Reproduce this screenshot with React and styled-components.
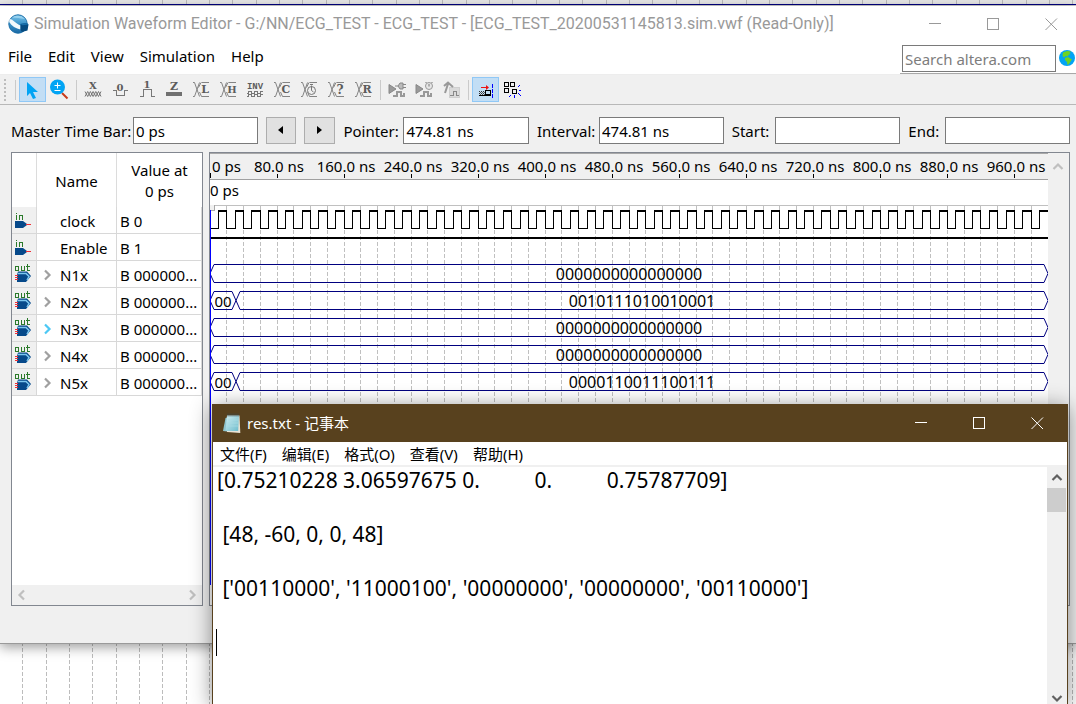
import React, { useLayoutEffect, useRef, useState } from "react";
import styled, { createGlobalStyle, css } from "styled-components";

const UI_FONT = '"Noto Sans", "Noto Sans CJK SC", sans-serif';
const TITLE_FONT = 'Roboto, "Noto Sans", sans-serif';

const GlobalStyle = createGlobalStyle`
  *, *::before, *::after { box-sizing: border-box; }
  body { margin: 0; background: #fff; font: 15px/20px ${UI_FONT}; color: #000; }
  button, input, textarea { font: inherit; color: inherit; margin: 0; border-radius: 0; }
`;

/* ---------- desktop ---------- */

const Desktop = styled.div`
  position: relative;
  display: flex;
  flex-direction: column;
  height: 100vh;
  min-height: 640px;
  padding-bottom: 60px;
  overflow: hidden;
`;

const Backdrop = styled.svg`
  position: absolute;
  inset: 0;
  width: 100%;
  height: 100%;
`;

const Editor = styled.main`
  position: relative;
  flex: 1;
  display: flex;
  flex-direction: column;
  margin-top: 6px;
  background: #f0f0f0;
  border-bottom: 1px solid #9a9a9a;
  box-shadow: 0 3px 12px rgba(0, 0, 0, 0.4);
`;

/* ---------- title bars ---------- */

const TitleBar = styled.header`
  display: flex;
  align-items: center;
  height: ${(p) => (p.$dark ? 38 : 36)}px;
  padding: 0 ${(p) => (p.$dark ? 5 : 0)}px 0 8px;
  background: ${(p) => (p.$dark ? "#58411e" : "#fff")};
  color: ${(p) => (p.$dark ? "#fff" : "#999")};
`;

const Title = styled.h1`
  flex: 1;
  margin: 0 0 0 4px;
  font-family: ${TITLE_FONT};
  font-size: 16px;
  font-weight: 400;
  line-height: 20px;
  white-space: nowrap;
`;

const NoteTitle = styled.h2`
  flex: 1;
  margin: 0 0 0 5px;
  font-size: 15px;
  font-weight: 400;
  line-height: 20px;
  white-space: nowrap;
`;

const WindowControls = styled.div`
  display: flex;
  gap: 8px;
`;

const ControlButton = styled.button`
  display: grid;
  place-items: center;
  width: 50px;
  height: 30px;
  padding: 0;
  border: 0;
  background: none;
`;

/* ---------- menus ---------- */

const MenuRow = styled.div`
  display: flex;
  justify-content: space-between;
  height: 33px;
  background: #fff;
  border-bottom: 1px solid #ededed;
`;

const Menu = styled.nav`
  display: flex;
  gap: ${(p) => p.$gap}px;
  padding-left: ${(p) => p.$left}px;
`;

const MenuItem = styled.button`
  height: ${(p) => (p.$compact ? 23 : 28)}px;
  padding: 0;
  border: 0;
  background: none;
`;

const SearchArea = styled.form`
  display: flex;
  align-items: flex-start;
  gap: 2px;
  padding: 3px 0 0 2px;
  border-bottom: 1px solid #a8a8a8;
`;

const SearchInput = styled.input`
  width: 154px;
  height: 27px;
  padding: 2px;
  border: 1px solid #7a7a7a;
  background: #fff;
  &::placeholder { color: #7d7d7d; opacity: 1; }
`;

const GlobeButton = styled.button`
  display: block;
  width: 18px;
  height: 26px;
  padding: 5px 1px;
  border: 0;
  background: none;
`;

/* ---------- toolbar ---------- */

const Toolbar = styled.div`
  display: flex;
  align-items: center;
  height: 30px;
  border-bottom: 1px solid #b8b8b8;
`;

const Grip = styled.div`
  width: 2px;
  height: 22px;
  margin: 0 6px 0 4px;
  background: repeating-linear-gradient(#bdbdbd 0 2px, transparent 2px 4px);
`;

const Separator = styled.div`
  width: 1px;
  height: 20px;
  margin: 0 3px;
  background: #cacaca;
`;

const ToolButton = styled.button`
  width: 27px;
  height: 25px;
  padding: 0;
  border: 0;
  background: none;
  svg { display: block; }
  ${(p) =>
    p.$active &&
    css`
      background: #c2def5;
      box-shadow: inset 0 0 0 1px #90c8f6;
    `}
`;

/* ---------- time bar ---------- */

const TimeBar = styled.form`
  display: flex;
  gap: 8px;
  padding: 12px 6px 8px 11px;
`;

const Field = styled.label`
  flex: 1 1 ${(p) => p.$basis}px;
  display: flex;
  align-items: center;
  white-space: nowrap;
  min-width: 0;
`;

const FieldName = styled.span`
  flex: 0 0 ${(p) => p.$width}px;
`;

const FieldInput = styled.input`
  flex: 1;
  min-width: 0;
  height: 27px;
  padding: 1px 2px;
  border: 1px solid #7a7a7a;
  background: #fff;
`;

const StepButton = styled.button`
  width: 31px;
  height: 27px;
  padding: 0 0 2px;
  border: 1px solid #adadad;
  background: #e1e1e1;
  svg { display: block; margin: auto; }
`;

/* ---------- panes ---------- */

const Panes = styled.div`
  flex: 1;
  display: flex;
  gap: 6px;
  min-height: 0;
  padding: 0 6px 37px 11px;
`;

const Pane = styled.section`
  display: flex;
  min-width: 0;
  border: 1px solid #828790;
`;

const SignalPane = styled(Pane)`
  flex: 0 0 192px;
  flex-direction: column;
  justify-content: space-between;
  background: #fff;
`;

const WavePane = styled(Pane)`
  flex: 1;
`;

const SignalTable = styled.table`
  width: 190px;
  border-collapse: separate;
  border-spacing: 0;
  table-layout: fixed;
`;

const Head = styled.th`
  width: ${(p) => p.$width}px;
  height: 54px;
  padding: 2px 0 0;
  border-right: ${(p) => (p.$last ? 0 : 1)}px solid #dcdcdc;
  font-weight: 400;
  line-height: 21px;
`;

const Cell = styled.td`
  height: 27px;
  padding: ${(p) => (p.$shade ? 0 : 2)}px 0 0 ${(p) => p.$left || 0}px;
  border-right: 1px solid #d8d8d8;
  border-bottom: 1px solid #d8d8d8;
  background: ${(p) => (p.$shade ? "#f0f0f0" : "#fff")};
  line-height: 24px;
  white-space: nowrap;
  svg { display: block; }
`;

const NameWrap = styled.div`
  display: grid;
  grid-template-columns: 19px 1fr;
  align-items: center;
`;

const HScroll = styled.div`
  display: flex;
  justify-content: space-between;
  align-items: center;
  height: 20px;
  padding: 0 4px;
  background: #f0f0f0;
`;

const ScrollArrow = styled.button`
  padding: 0;
  border: 0;
  background: none;
  svg { display: block; margin: auto; }
`;

const WaveView = styled.div`
  flex: 1;
  min-width: 0;
  background: #fff;
  overflow: hidden;
  display: flex;
  flex-direction: column;
`;

const Ruler = styled.svg`
  display: block;
  width: 100%;
  height: 27px;
  flex: none;
  background: #f0f0f0;
  border-top: 1px solid #a8a8a8;
  border-bottom: 1px solid #a0a0a0;
`;

const CursorRow = styled.div`
  flex: none;
  height: 25px;
  line-height: 20px;
`;

const Plot = styled.svg`
  display: block;
  flex: 1;
  width: 100%;
  min-height: 0;
`;

const VScroll = styled.div`
  flex: 0 0 21px;
  padding: 4px 2px 0 0;
  background: #f0f0f0;
  text-align: center;
`;

/* ---------- notepad ---------- */

const Notepad = styled.section`
  position: absolute;
  left: 212px;
  right: 8px;
  top: 404px;
  bottom: 0;
  display: flex;
  flex-direction: column;
  border: solid #58411e;
  border-width: 0 1px;
  background: #fff;
  box-shadow: 0 3px 20px rgba(0, 0, 0, 0.45);
`;

const NoteMenuRow = styled.div`
  height: 25px;
  border-bottom: 2px solid #f0f0f0;
`;

const NoteBody = styled.div`
  position: relative;
  flex: 1;
  display: flex;
  min-height: 0;
`;

const NoteText = styled.textarea`
  flex: 1;
  min-width: 0;
  padding: 0 0 0 4px;
  border: 0;
  outline: 0;
  resize: none;
  overflow: hidden;
  white-space: pre;
  font-size: 21px;
  line-height: 27px;
`;

const Caret = styled.span`
  position: absolute;
  left: 3px;
  top: 162px;
  width: 1px;
  height: 27px;
  background: #000;
`;

const NoteScroll = styled.div`
  flex: 0 0 20px;
  display: flex;
  flex-direction: column;
  padding: 5px 1px 0 0;
  background: #f0f0f0;
`;

const Thumb = styled.div`
  height: 24px;
  margin: 4px 0 auto;
  background: #cdcdcd;
`;

/* ---------- icons ---------- */

const MinIcon = () => (
  <svg width="13" height="13" shapeRendering="crispEdges"><path d="M0 5.500h12" stroke="currentColor" /></svg>
);
const MaxIcon = () => (
  <svg width="13" height="13" shapeRendering="crispEdges"><rect x=".5" y=".5" width="11" height="11" fill="none" stroke="currentColor" /></svg>
);
const CloseIcon = () => (
  <svg width="13" height="13"><path d="M.5.5l11.500 11.500M12 .5L.5 12" stroke="currentColor" /></svg>
);

const Controls = () => (
  <WindowControls>
    <ControlButton aria-label="Minimize"><MinIcon /></ControlButton>
    <ControlButton aria-label="Maximize"><MaxIcon /></ControlButton>
    <ControlButton aria-label="Close"><CloseIcon /></ControlButton>
  </WindowControls>
);

const AppIcon = () => (
  <svg width="22" height="20" viewBox="0 0 22 20">
    <defs>
      <linearGradient id="orb" x1="0" y1="0" x2="0" y2="1">
        <stop offset="0" stopColor="#7cc4ea" /><stop offset=".5" stopColor="#3a93c9" /><stop offset="1" stopColor="#1a68a4" />
      </linearGradient>
    </defs>
    <circle cx="10" cy="10" r="9.2" fill="url(#orb)" stroke="#1b6ea8" />
    <path d="M1.500 5C5 5 8 10 12.500 11.500v4C8 14.500 3.500 12 1.200 8z" fill="#f4fafd" />
    <path d="M4 3.500C8 .5 14 1.500 17 5c-5-1-9-1-13-1.500z" fill="#a8dbf3" opacity=".7" />
    <path d="M12.500 10l6-1 2 1.500-1 6-5.500 1.500-1.500-2z" fill="#064b80" />
    <path d="M12.500 10l6-1 2 1.500-6 .8z" fill="#1870ac" />
  </svg>
);

const GlobeIcon = () => (
  <svg width="16" height="16" viewBox="0 0 16 16">
    <circle cx="8" cy="8" r="8" fill="#02a4f4" />
    <path d="M4 2.500L8 1l4 .5-1.500 1.500 1 1-2 1L9 6.500 6.500 6 5 7.500 3.500 6z" fill="#6fd321" />
    <path d="M6 8l3-1 4 2.500-1.500 2L10 14l-1.500 1L8 12 6 10z" fill="#6fd321" />
  </svg>
);

const NotepadIcon = () => (
  <svg width="21" height="21" viewBox="0 0 21 21">
    <defs>
      <linearGradient id="page" x1="0" y1="0" x2="1" y2="1">
        <stop offset="0" stopColor="#d2eef2" /><stop offset="1" stopColor="#6dbccc" />
      </linearGradient>
    </defs>
    <path d="M4.500 5L2 18l4 .5L8 4z" fill="#8fc3cb" />
    <path d="M6 2.500h12.500l.8 17.500L6 19z" fill="#e8e3d5" />
    <path d="M6 2.500h12l-.8 15.500L4.500 18z" fill="url(#page)" />
    <path d="M7 .5v3M9 .5v3M11 .5v3M13 .5v3M15 .5v3M17 .5v3" stroke="#3b4a4d" strokeWidth=".8" />
    <path d="M7 7h10M6.500 10H17M6 13h11" stroke="#a9dce4" strokeWidth=".7" />
  </svg>
);

const Chevron = ({ dir, color = "#bfbfbf" }) => {
  const paths = {
    left: "M8 1.500L3.500 6 8 10.500",
    right: "M4 1.500L8.500 6 4 10.500",
    up: "M1.500 8L6 3.500 10.500 8",
    down: "M1.500 4L6 8.500 10.500 4",
  };
  return (
    <svg width="12" height="12" viewBox="0 0 12 12">
      <path d={paths[dir]} fill="none" stroke={color} strokeWidth="2.2" />
    </svg>
  );
};

const InIcon = () => (
  <svg width="24" height="26" viewBox="0 0 24 26">
    <path d="M4.500 6v1M4.500 8v5M7.500 13V8.500h2.500l.5 1V13" stroke="#2b7a2b" fill="none" shapeRendering="crispEdges" />
    <path d="M3 14h8l4 3v1l-4 3H3z" fill="#06498a" />
    <path d="M14 17.500h5" stroke="#f03038" shapeRendering="crispEdges" />
  </svg>
);

const OutIcon = () => (
  <svg width="24" height="26" viewBox="0 0 24 26">
    <path d="M3.500 5.500h3v4h-3zM9.500 5v4.500h3V5M15.500 3v6.500h2M13.500 5.500h4" stroke="#2b7a2b" fill="none" shapeRendering="crispEdges" />
    <path d="M6 10.500h9l4 4.500-5 6H5v-7z" fill="#06498a" />
    <path d="M6 12.500h8l3 3-2 3.500" stroke="#7cc6ee" strokeWidth="1.500" fill="none" />
    <path d="M3 14.500h3M3 16.500h3M3 18.500h3" stroke="#f03038" shapeRendering="crispEdges" />
  </svg>
);

const GlyphFrame = ({ children }) => (
  <svg width="27" height="25" viewBox="0 0 27 25" fill="none" stroke="#777" shapeRendering="crispEdges">
    {children}
  </svg>
);

const Glyph = ({ x = 13, y = 13, size = 11, family = '"DejaVu Serif", serif', children }) => (
  <text x={x} y={y} textAnchor="middle" fontFamily={family} fontWeight="700" fontSize={size} fill="#5c5c5c" stroke="none">
    {children}
  </text>
);

const Crossing = () => <path d="M5 5.500h1.500l5 14M11.500 5.500l-5 14H5M13.500 5.500H21M13 5.500l-2.500 5M13.500 19.500H21M11.500 15l2 4.500" shapeRendering="auto" strokeWidth=".9" />;

const toolGlyphs = {
  unknown: <><Glyph y={12} size={10}>X</Glyph><path d="M5 14.500l2.700 5 2.700-5 2.700 5 2.700-5 2.700 5 2.500-5M5 19.500l2.700-5 2.700 5 2.700-5 2.700 5 2.700-5 2.500 5" shapeRendering="auto" strokeWidth="1" /></>,
  low: <><Glyph y={14} size={10}>0</Glyph><path d="M6 13.500h3.500v5h8v-5H21" /></>,
  high: <><Glyph y={11} size={10}>1</Glyph><path d="M6 19.500h3.500v-7h8v7H21" /></>,
  highZ: <><Glyph y={13}>Z</Glyph><path d="M5 17h16" strokeWidth="4" stroke="#707070" /></>,
  weakLow: <><Crossing /><Glyph x={17} y={16}>L</Glyph></>,
  weakHigh: <><Crossing /><Glyph x={17} y={16} size={10}>H</Glyph></>,
  invert: <><Glyph size={9} y={12} family={'"Liberation Mono", monospace'}>INV</Glyph><path d="M5 16.500h1.500v-2h3v2h3v-2h3v2h3v-2H21M5 19.500h1.500v-2h3v2h3v-2h3v2h3v-2H21" /></>,
  count: <><Crossing /><Glyph x={17} y={16}>C</Glyph></>,
  clock: <><Crossing /><g shapeRendering="auto"><circle cx="15.500" cy="13.500" r="4" fill="#f0f0f0" /><path d="M15.500 8.500v5l2 1.500M14 7.500h3" /></g></>,
  arbitrary: <><Crossing /><Glyph x={17} y={17} size={12}>?</Glyph></>,
  random: <><Crossing /><Glyph x={17} y={16}>R</Glyph></>,
};

const RunWave = () => (
  <>
    <path d="M5 7.500v9l7-4.500z" fill="#9a9a9a" stroke="#888" shapeRendering="auto" />
    <path d="M9 19h4v-4h4v4h3v-3" strokeWidth="2" stroke="#999" />
  </>
);

const functionalGlyph = <><RunWave /><path d="M11 9h3l2-3h3v6h-3l-2-3M19 7.500h3M19 10.500h3" stroke="#888" fill="#bbb" shapeRendering="auto" /></>;
const timingGlyph = <><RunWave /><g shapeRendering="auto"><circle cx="18" cy="9" r="3.500" fill="#e6e6e6" stroke="#999" /><path d="M18 7v2.500M14.500 5l1 1M21.500 5l-1 1" /></g></>;
const scriptGlyph = <><path d="M11 10h10v10H11z" fill="#dadada" stroke="#cfcfcf" /><path d="M6 9l4-3.500 5 4.500M10 7l-3 9" strokeWidth="2" stroke="#999" shapeRendering="auto" /><path d="M12 18.500h3v-4h3v4h3" stroke="#888" /></>;

const PointerGlyph = () => (
  <svg width="27" height="25" viewBox="0 0 27 25"><path d="M8 5l11 10h-5l3 6-3 1-3-6-3 3z" fill="#02a4f4" /></svg>
);

const ZoomGlyph = () => (
  <svg width="27" height="25" viewBox="0 0 27 25">
    <path d="M16 16l5.500 5.500" stroke="#c63b1c" strokeWidth="2" />
    <circle cx="11.500" cy="10" r="7.500" fill="#02a4f4" />
    <path d="M8.500 8.500h6M11.500 5.500v6M8.500 13.500h6" stroke="#fff" />
  </svg>
);

const SnapGlyph = () => (
  <svg width="27" height="25" viewBox="0 0 27 25" fill="none" shapeRendering="crispEdges">
    <path d="M9 10.500h7" stroke="#e11" /><path d="M14 8l3 2.500-3 2.500z" fill="#e11" shapeRendering="auto" />
    <path d="M7 14.500h7M7 16.500h7" stroke="#333" strokeDasharray="1 1" />
    <path d="M8 15.500h6M8 17.500h6" stroke="#555" strokeDasharray="1 1" />
    <rect x="13.500" y="13.500" width="5" height="4" stroke="#000" />
    <path d="M7 18.500h12" stroke="#000" />
    <path d="M20.500 7v14" stroke="#00f" strokeDasharray="4 1" />
  </svg>
);

const GridGlyph = () => (
  <svg width="27" height="25" viewBox="0 0 27 25" fill="none" shapeRendering="crispEdges">
    <g stroke="#000">
      <rect x="5.500" y="5.500" width="4" height="4" /><rect x="11.500" y="5.500" width="4" height="4" />
      <rect x="5.500" y="11.500" width="4" height="4" /><rect x="13.500" y="12.500" width="4" height="4" />
    </g>
    <path d="M19 10l2-2M20 13.500h2M19 16l3 3M15.500 18v3M12 18l-2 2" stroke="#00f" shapeRendering="auto" />
  </svg>
);

/* ---------- waveform ---------- */

const TOTAL_NS = 1000;
const ROW = 27;
const signals = [
  { name: "clock", value: "B 0", kind: "clock" },
  { name: "Enable", value: "B 1", kind: "high" },
  { name: "N1x", value: "B 000000...", kind: "bus", data: "0000000000000000" },
  { name: "N2x", value: "B 000000...", kind: "bus", data: "0010111010010001", lead: "00" },
  { name: "N3x", value: "B 000000...", kind: "bus", data: "0000000000000000", hot: true },
  { name: "N4x", value: "B 000000...", kind: "bus", data: "0000000000000000" },
  { name: "N5x", value: "B 000000...", kind: "bus", data: "0000110011100111", lead: "00" },
];

const ClockTrace = ({ y, at }) => {
  const tops = [];
  let thin = `M0 ${y + 18.5}`;
  for (let ns = 0; ns < TOTAL_NS; ns += 20) {
    const rise = at(ns + 10);
    const fall = at(ns + 20);
    thin += `H${rise + 0.5}V${y + 0.5}M${fall + 0.5} ${y + 0.5}V${y + 18.5}`;
    tops.push(`M${rise} ${y + 1}H${fall + 1}`);
  }
  return (
    <g stroke="#000" fill="none">
      <path d={thin} />
      <path d={tops.join("")} strokeWidth="2" />
    </g>
  );
};

const BusSegment = ({ from, to, y, label }) => (
  <g>
    <path
      d={`M${from + 4} ${y + 0.5}H${to - 4}L${to} ${y + 9.5}L${to - 4} ${y + 18.5}H${from + 4}L${from} ${y + 9.5}Z`}
      fill="none"
      stroke="#00007f"
    />
    <text x={(from + to) / 2} y={y + 16} textAnchor="middle" fontSize={label.length > 2 ? 16 : 15} fill="#000">{label}</text>
  </g>
);

function Waveforms() {
  const ref = useRef(null);
  const [width, setWidth] = useState(838);
  useLayoutEffect(() => {
    const measure = () => setWidth(ref.current.clientWidth);
    measure();
    const observer = new ResizeObserver(measure);
    observer.observe(ref.current);
    return () => observer.disconnect();
  }, []);
  const at = (ns) => Math.floor((ns * width) / TOTAL_NS);
  const ticks = Array.from({ length: 12 }, (_, i) => (i + 1) * 80);
  const grid = Array.from({ length: 49 }, (_, i) => (i + 1) * 20);

  return (
    <WaveView ref={ref}>
      <Ruler role="img" aria-label="Time ruler">
        <text x="2" y="18" fontSize="15">0 ps</text>
        <path d="M.5 19v5" stroke="#000" />
        {ticks.map((ns) => (
          <g key={ns}>
            <text x={at(ns) + 2} y="18" fontSize="15" textAnchor="middle">{ns}.0 ns</text>
            <path d={`M${at(ns) + 0.5} 20v4`} stroke="#000" />
          </g>
        ))}
      </Ruler>
      <CursorRow>0 ps</CursorRow>
      <Plot role="img" aria-label="Signal waveforms">
        <g shapeRendering="crispEdges">
          <path d={`M0 .5H${width}`} stroke="#c0c0c0" />
          {grid.map((ns) => (
            <line key={ns} x1={at(ns) + 0.5} x2={at(ns) + 0.5} y1="1" y2="380" stroke="#c0c0c0" strokeDasharray="4 2" />
          ))}
          <path d="M0 0h4v5H0z" fill="#f0f0f0" /><path d="M4.500 0v5.500H0" stroke="#a8a8a8" fill="none" />
        </g>
        {signals.map((s, i) => {
          const y = 5 + i * ROW;
          if (s.kind === "clock") return <g key={s.name} shapeRendering="crispEdges"><ClockTrace y={y} at={at} /></g>;
          if (s.kind === "high") return <path key={s.name} d={`M0 ${y + 1}H${width}`} stroke="#000" strokeWidth="2" shapeRendering="crispEdges" />;
          return (
            <g key={s.name}>
              {s.lead && <BusSegment from={0} to={26} y={y} label={s.lead} />}
              <BusSegment from={s.lead ? 26 : 0} to={width} y={y} label={s.data} />
            </g>
          );
        })}
        <path d="M.5 5v375" stroke="#00f" shapeRendering="crispEdges" />
      </Plot>
    </WaveView>
  );
}

const noteText = `[0.75210228 3.06597675 0.          0.          0.75787709]

 [48, -60, 0, 0, 48]

 ['00110000', '11000100', '00000000', '00000000', '00110000']

`;

export default function App() {
  return (
    <Desktop>
      <GlobalStyle />
      <Backdrop aria-hidden="true" shapeRendering="crispEdges">
        <defs>
          <pattern id="guides" width="70" height="6" patternUnits="userSpaceOnUse">
            <path d="M22.500 0v4M46.500 0v4M69.500 0v4" stroke="#bcbcbc" />
          </pattern>
        </defs>
        <rect width="100%" height="4" fill="#e8e8e8" />
        <rect width="100%" height="100%" fill="url(#guides)" />
        <rect y="4" width="100%" height="1" fill="#000080" />
        <rect y="5" width="100%" height="1" fill="#d0d0d0" />
      </Backdrop>

      <Editor>
        <TitleBar>
          <AppIcon />
          <Title>
            Simulation Waveform Editor - G:/NN/ECG_TEST - ECG_TEST - [ECG_TEST_20200531145813.sim.vwf (Read-Only)]
          </Title>
          <Controls />
        </TitleBar>

        <MenuRow>
          <Menu $gap={16} $left={8}>
            {["File", "Edit", "View", "Simulation", "Help"].map((m) => <MenuItem key={m}>{m}</MenuItem>)}
          </Menu>
          <SearchArea>
            <SearchInput aria-label="Search altera.com" placeholder="Search altera.com" />
            <GlobeButton type="button" aria-label="Search the web"><GlobeIcon /></GlobeButton>
          </SearchArea>
        </MenuRow>

        <Toolbar>
          <Grip />
          <Separator />
          <ToolButton $active aria-label="Selection tool"><PointerGlyph /></ToolButton>
          <ToolButton aria-label="Zoom tool"><ZoomGlyph /></ToolButton>
          <Separator />
          {Object.entries(toolGlyphs).map(([name, glyph]) => (
            <ToolButton key={name} aria-label={name}><GlyphFrame>{glyph}</GlyphFrame></ToolButton>
          ))}
          <Separator />
          <ToolButton aria-label="Run functional simulation"><GlyphFrame>{functionalGlyph}</GlyphFrame></ToolButton>
          <ToolButton aria-label="Run timing simulation"><GlyphFrame>{timingGlyph}</GlyphFrame></ToolButton>
          <ToolButton aria-label="Generate script"><GlyphFrame>{scriptGlyph}</GlyphFrame></ToolButton>
          <Separator />
          <ToolButton $active aria-label="Snap to transition"><SnapGlyph /></ToolButton>
          <ToolButton aria-label="Snap to grid"><GridGlyph /></ToolButton>
        </Toolbar>

        <TimeBar>
          <Field $basis={247}><FieldName $width={122}>Master Time Bar:</FieldName><FieldInput defaultValue="0 ps" /></Field>
          <StepButton type="button" aria-label="Previous transition"><svg width="5" height="8"><path d="M5 0v8L0 4z" /></svg></StepButton>
          <StepButton type="button" aria-label="Next transition"><svg width="5" height="8"><path d="M0 0v8l5-4z" /></svg></StepButton>
          <Field $basis={186}><FieldName $width={60}>Pointer:</FieldName><FieldInput defaultValue="474.81 ns" /></Field>
          <Field $basis={187}><FieldName $width={62}>Interval:</FieldName><FieldInput defaultValue="474.81 ns" /></Field>
          <Field $basis={169}><FieldName $width={43}>Start:</FieldName><FieldInput /></Field>
          <Field $basis={162}><FieldName $width={37}>End:</FieldName><FieldInput /></Field>
        </TimeBar>

        <Panes>
          <SignalPane>
            <SignalTable>
              <thead>
                <tr>
                  <Head $width={25} aria-label="Type" />
                  <Head $width={80}>Name</Head>
                  <Head $width={85} $last>Value at<br />0 ps</Head>
                </tr>
              </thead>
              <tbody>
                {signals.map((s) => (
                  <tr key={s.name}>
                    <Cell $shade>{s.kind === "bus" ? <OutIcon /> : <InIcon />}</Cell>
                    <Cell $left={4}>
                      <NameWrap>
                        {s.kind === "bus" ? <Chevron dir="right" color={s.hot ? "#4cc8f4" : "#a0a0a0"} /> : <span />}
                        <span>{s.name}</span>
                      </NameWrap>
                    </Cell>
                    <Cell $left={3}>{s.value}</Cell>
                  </tr>
                ))}
              </tbody>
            </SignalTable>
            <HScroll>
              <ScrollArrow aria-label="Scroll left"><Chevron dir="left" /></ScrollArrow>
              <ScrollArrow aria-label="Scroll right"><Chevron dir="right" /></ScrollArrow>
            </HScroll>
          </SignalPane>
          <WavePane>
            <Waveforms />
            <VScroll><ScrollArrow aria-label="Scroll up"><Chevron dir="up" /></ScrollArrow></VScroll>
          </WavePane>
        </Panes>
      </Editor>

      <Notepad>
        <TitleBar $dark>
          <NotepadIcon />
          <NoteTitle>res.txt - 记事本</NoteTitle>
          <Controls />
        </TitleBar>
        <NoteMenuRow>
          <Menu $gap={15} $left={7}>
            {["文件(F)", "编辑(E)", "格式(O)", "查看(V)", "帮助(H)"].map((m) => <MenuItem $compact key={m}>{m}</MenuItem>)}
          </Menu>
        </NoteMenuRow>
        <NoteBody>
          <NoteText aria-label="res.txt" spellCheck={false} defaultValue={noteText} />
          <Caret />
          <NoteScroll>
            <ScrollArrow aria-label="Scroll up"><Chevron dir="up" color="#606060" /></ScrollArrow>
            <Thumb />
            <ScrollArrow aria-label="Scroll down"><Chevron dir="down" color="#606060" /></ScrollArrow>
          </NoteScroll>
        </NoteBody>
      </Notepad>
    </Desktop>
  );
}
